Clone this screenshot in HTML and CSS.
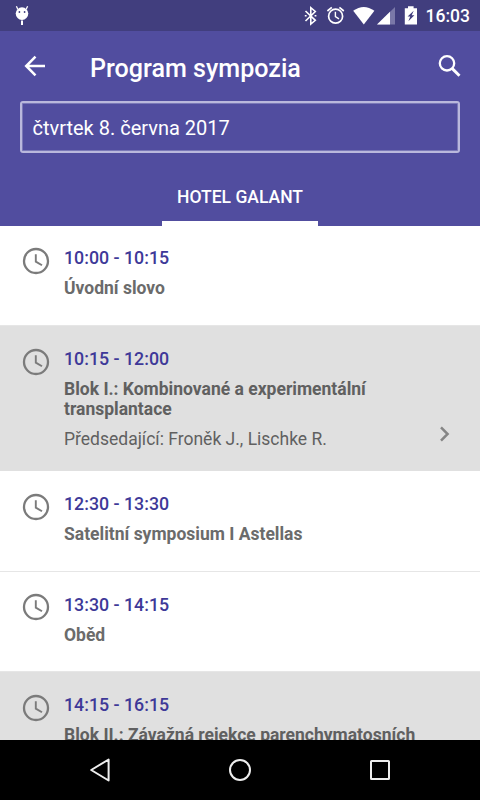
FILE: index.html
```html
<!DOCTYPE html>
<html lang="cs">
<head>
    <meta charset="UTF-8">
    <meta name="viewport" content="width=device-width, initial-scale=1.0">
    <title>Program sympozia</title>
    <link rel="stylesheet" href="styles.css">
</head>
<body>
    <svg class="sprite">
        <symbol id="clock" viewBox="0 0 28 28">
            <circle cx="14" cy="14" r="12" fill="none" stroke="currentColor" stroke-width="2.3"/>
            <path d="M13.8 7.3V14.6L20 18.3" fill="none" stroke="currentColor" stroke-width="1.9"/>
        </symbol>
    </svg>

    <div class="status-bar">
        <svg class="bug-icon" width="16" height="21" viewBox="0 0 16 21">
            <path d="M3.7 4L2.4 1.2M12.3 4L13.6 1.2" stroke="#fff" stroke-width="1.3"/>
            <circle cx="8" cy="8.6" r="6.3" fill="#fff"/>
            <circle cx="5.4" cy="7" r="0.9" fill="#413e7e"/>
            <circle cx="10.6" cy="7" r="0.9" fill="#413e7e"/>
            <path d="M8 15.5V20" stroke="#fff" stroke-width="2"/>
        </svg>
        <div class="status-right">
            <!-- Bluetooth, alarm, wifi, signal, battery -->
            <svg width="120" height="31" viewBox="300 0 120 31">
                <path d="M305.5 11L315.3 20.3L310.8 24V7.7L315.3 11.5L305.5 21" fill="none" stroke="#fff" stroke-width="1.6"/>
                <path d="M304.8 15.8h1.8M314.6 15.8h1.8" stroke="#fff" stroke-width="1.6"/>
                <circle cx="335.6" cy="16.2" r="7" fill="none" stroke="#fff" stroke-width="1.7"/>
                <path d="M335.4 11.8V16.6L339 18.8" fill="none" stroke="#fff" stroke-width="1.4"/>
                <path d="M327.4 11L331.8 7.4M343.8 11L339.4 7.4" stroke="#fff" stroke-width="1.7"/>
                <path d="M353.2 10.8Q363.7 3.2 374.4 10.8L363.8 24.4Z" fill="#fff"/>
                <path d="M395 7V24.6H377Z" fill="#7a78a8"/>
                <path d="M390 11.8V24.6H377Z" fill="#fff"/>
                <path d="M404.8 8.2H408V6.3H413.6V8.2H417V24.6H404.8Z" fill="#fff"/>
                <path d="M413.7 10.8L407.6 16.6H410.2L408.4 21.2L414.4 15.3H411.7Z" fill="#413e7e"/>
            </svg>
            <span class="status-time">16:03</span>
        </div>
    </div>

    <div class="header">
        <div class="toolbar">
            <svg class="back-icon" width="22" height="22" viewBox="0 0 22 22">
                <path d="M21 11H2.5M11.5 1.7L2.2 11L11.5 20.3" fill="none" stroke="#fff" stroke-width="2.5"/>
            </svg>
            <h1 class="title">Program sympozia</h1>
            <svg class="search-icon" width="24" height="24" viewBox="0 0 24 24">
                <circle cx="9" cy="9.3" r="7.2" fill="none" stroke="#fff" stroke-width="2.3"/>
                <path d="M13.8 14.1L21.5 21.8" stroke="#fff" stroke-width="2.9"/>
            </svg>
        </div>
        <div class="date-select">čtvrtek 8. června 2017</div>
        <div class="tabs">
            <div class="tab">HOTEL GALANT</div>
        </div>
    </div>

    <div class="schedule">
        <div class="session">
            <svg class="clock"><use href="#clock"/></svg>
            <div class="details">
                <div class="time">10:00 - 10:15</div>
                <div class="name">Úvodní slovo</div>
            </div>
        </div>
        <div class="session block">
            <svg class="clock"><use href="#clock"/></svg>
            <div class="details">
                <div class="time">10:15 - 12:00</div>
                <div class="name">Blok I.: Kombinované a experimentální transplantace</div>
                <div class="chair">Předsedající: Froněk J., Lischke R.</div>
            </div>
            <svg class="chevron" width="12" height="16" viewBox="0 0 12 16">
                <path d="M2 1.4L8.6 8L2 14.6" fill="none" stroke="currentColor" stroke-width="2.5"/>
            </svg>
        </div>
        <div class="session">
            <svg class="clock"><use href="#clock"/></svg>
            <div class="details">
                <div class="time">12:30 - 13:30</div>
                <div class="name">Satelitní symposium I Astellas</div>
            </div>
        </div>
        <div class="session">
            <svg class="clock"><use href="#clock"/></svg>
            <div class="details">
                <div class="time">13:30 - 14:15</div>
                <div class="name">Oběd</div>
            </div>
        </div>
        <div class="session block">
            <svg class="clock"><use href="#clock"/></svg>
            <div class="details">
                <div class="time">14:15 - 16:15</div>
                <div class="name">Blok II.: Závažná rejekce parenchymatosních</div>
            </div>
        </div>
    </div>

    <div class="nav-bar">
        <svg width="24" height="26" viewBox="0 0 24 26">
            <path d="M20.6 2.5V23.5L3.2 13Z" fill="none" stroke="#eee" stroke-width="2" stroke-linejoin="round"/>
        </svg>
        <svg width="24" height="24" viewBox="0 0 24 24">
            <circle cx="12" cy="12" r="10" fill="none" stroke="#eee" stroke-width="2"/>
        </svg>
        <svg width="24" height="24" viewBox="0 0 24 24">
            <rect x="3" y="3" width="18" height="18" rx="0.5" fill="none" stroke="#eee" stroke-width="2"/>
        </svg>
    </div>
</body>
</html>
```
FILE: styles.css
```css
* {
    box-sizing: border-box;
}
body {
    font-family: Roboto, sans-serif;
    margin: 0;
    height: 800px;
    display: flex;
    flex-direction: column;
    overflow: hidden;
    background: white;
}
.sprite {
    display: none;
}
/* Status bar */
.status-bar {
    flex: none;
    height: 31px;
    padding: 0 0 0 14px;
    display: flex;
    justify-content: space-between;
    background: #413e7e;
    color: white;
}
.bug-icon {
    margin-top: 5px;
}
.status-right {
    display: flex;
    width: 180px;
}
.status-time {
    margin-left: 5.5px;
    font-size: 17.5px;
    font-weight: 500;
    line-height: 33px;
}
/* Header */
.header {
    flex: none;
    height: 194.6px;
    padding: 0 20px;
    background: #514d9f;
    color: white;
}
.toolbar {
    height: 70px;
    display: flex;
    align-items: center;
}
.back-icon {
    margin-left: 4px;
}
.title {
    flex: 1;
    margin: 4px 0 0 44px;
    font-size: 25.1px;
    font-weight: 500;
}
.search-icon {
    margin-right: -2px;
}
.date-select {
    height: 52px;
    padding-left: 10.5px;
    border: 2px solid #bab8dc;
    border-radius: 3px;
    box-shadow: inset 0 0 0 1px rgba(186, 184, 220, 0.4);
    font-size: 20px;
    line-height: 50px;
}
.tabs {
    height: 72.6px;
    display: flex;
    justify-content: center;
    align-items: flex-end;
}
.tab {
    width: 156px;
    height: 56px;
    border-bottom: 5px solid white;
    font-size: 17.5px;
    font-weight: 500;
    line-height: 55px;
    text-align: center;
}
/* Program */
.schedule {
    flex: 1;
    min-height: 0;
    overflow: hidden;
}
.session {
    display: flex;
    min-height: 100.6px;
    padding: 21.8px 29px 19.7px 21.5px;
    border-bottom: 1px solid #e6e6e6;
    color: #6b6b6b;
}
.block {
    background: #e0e0e0;
    border-bottom-color: #e0e0e0;
    color: #606060;
}
.clock {
    flex: none;
    width: 28px;
    height: 28px;
    margin-top: -0.4px;
    color: #7b7b7b;
}
.details {
    flex: 1;
    margin-left: 14.5px;
}
.time {
    color: #3e3998;
    font-size: 17.8px;
    font-weight: 500;
    line-height: 21.5px;
}
.name {
    margin-top: 9.5px;
    font-size: 17.5px;
    font-weight: 700;
    line-height: 20.5px;
}
.chair {
    margin-top: 9.5px;
    font-size: 17.5px;
    line-height: 21px;
}
.chevron {
    align-self: flex-end;
    margin-bottom: 8px;
    color: #858585;
}
/* Android navigation */
.nav-bar {
    flex: none;
    height: 60px;
    display: flex;
    justify-content: center;
    align-items: center;
    gap: 116px;
    background: black;
}
```
